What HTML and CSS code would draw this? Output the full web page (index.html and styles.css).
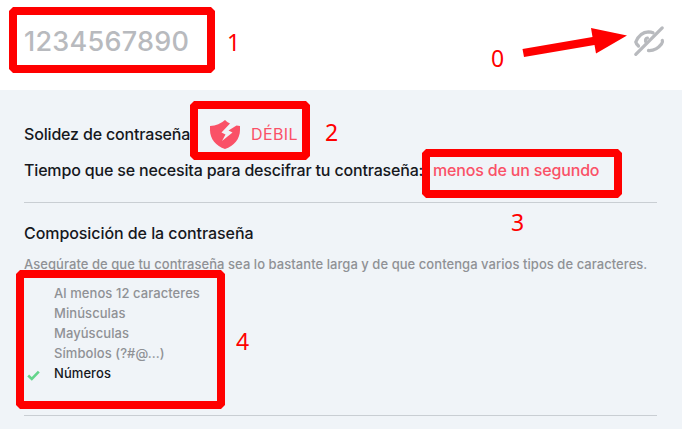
FILE: index.html
```html
<!DOCTYPE html>
<html lang="es">
<head>
<meta charset="utf-8">
<title>Solidez de contraseña</title>
<link rel="stylesheet" href="styles.css">
</head>
<body>
<main class="page">
  <header class="field">
    <span class="password">1234567890</span>
    <svg class="eye" viewBox="0 0 32 32" fill="none" stroke="#b8babe" stroke-linecap="round">
      <path d="M5.500 21Q3 18.500 2.800 17C5 11.500 9.500 7 15.500 6.800Q18 6.800 20 7.800M29.300 15.500Q30 17 28.500 19C25 23.500 20.500 25.800 15.500 25.500" stroke-width="3.300"/>
      <path d="M12.500 16.500Q12 13.500 14.500 13" stroke-width="3"/>
      <path d="M2.800 29.300L29.200 2.900" stroke-width="3.300"/>
    </svg>
  </header>
  <section class="panel">
    <div class="row">
      <span class="strength-label">Solidez de contraseña:</span>
      <svg class="shield" viewBox="0 0 30 29" fill="#fa5167">
        <path d="M15 0Q9 5.500 0 6V10C0 19 6 26 15 29C24 26 30 19 30 10V6L26.500 5.500L18.500 10.500L22.500 12.500L12 21L15.500 14.500L11.500 12.500L20 3.500Q17 2 15 0Z"/>
      </svg>
      <span class="weak">DÉBIL</span>
    </div>
    <div class="row">
      <span class="time-label">Tiempo que se necesita para descifrar tu contraseña:</span>
      <span class="time">menos de un segundo</span>
    </div>
    <div class="composition">
      <h2 class="title">Composición de la contraseña</h2>
      <p class="hint">Asegúrate de que tu contraseña sea lo bastante larga y de que contenga varios tipos de caracteres.</p>
      <ul class="rules">
        <li>Al menos 12 caracteres</li>
        <li>Minúsculas</li>
        <li>Mayúsculas</li>
        <li>Símbolos (?#@...)</li>
        <li class="done"><svg class="check" viewBox="0 0 13 11" fill="none"><path d="M1.200 5.500L4.800 9L11.800 1.600" stroke="#64d58c" stroke-width="2.600"/></svg>Números</li>
      </ul>
    </div>
  </section>
  <svg class="marks" viewBox="0 0 682 429">
    <g fill="none" stroke="#f00" stroke-width="8" stroke-linejoin="bevel">
      <path d="M13 11H211V69H13Z"/>
      <path d="M194 105H306V156H194Z"/>
      <path d="M426 153H618V194H426Z"/>
      <path d="M20 274H221V405H20Z"/>
    </g>
    <path fill="#f00" d="M522.500 49L592.500 37L591 28L627 35.500L596 53.500L594.500 45L524 57Z"/>
  </svg>
  <span class="num n0">0</span>
  <span class="num n1">1</span>
  <span class="num n2">2</span>
  <span class="num n3">3</span>
  <span class="num n4">4</span>
</main>
</body>
</html>
```

FILE: styles.css
```css
* { box-sizing: border-box; margin: 0; padding: 0; }
body { font-family: Inter, "Liberation Sans", sans-serif; font-weight: 500; color: #16181d; background: #fff; }
.page { position: relative; width: 682px; height: 429px; overflow: hidden; white-space: nowrap; }
.field { display: flex; align-items: center; justify-content: space-between; height: 90px; padding: 0 17px 8px 24px; }
.password { font-size: 27px; color: #b8babe; letter-spacing: 0.25px; }
.eye { width: 32px; height: 32px; }
.panel { height: 339px; padding: 26px 25px 0 24px; background: #f0f4f8; }
.row { display: flex; align-items: center; height: 36px; font-size: 16px; letter-spacing: -0.17px; }
.strength-label { width: 186px; }
.shield { width: 30px; height: 29px; margin-right: 11px; }
.weak, .time { color: #fa5167; }
.weak { font-weight: 400; letter-spacing: 0.4px; }
.time-label { width: 409px; }
.composition { height: 214px; margin-top: 14px; border-top: 1px solid #c9ced3; border-bottom: 1px solid #c9ced3; }
.title { margin-top: 19px; font-size: 16px; font-weight: 500; line-height: 22px; letter-spacing: -0.07px; }
.hint { margin-top: 10px; font-size: 13px; line-height: 20px; letter-spacing: 0.05px; color: #8f9195; }
.rules { margin-top: 9px; padding-left: 30px; list-style: none; font-size: 13px; line-height: 20px; letter-spacing: 0.07px; color: #8f9195; }
.rules li { display: flex; align-items: center; height: 20px; }
.rules .done { color: #16181d; }
.check { width: 13px; height: 11px; margin: 4px 14px 0 -27px; }
.marks { position: absolute; inset: 0; width: 682px; height: 429px; }
.num { position: absolute; font: 400 23px/24px "Noto Sans", sans-serif; color: #f00; }
.n0 { left: 491px; top: 46px; }
.n1 { left: 227px; top: 30px; }
.n2 { left: 325px; top: 120px; }
.n3 { left: 511px; top: 210px; }
.n4 { left: 236px; top: 329px; }
```
